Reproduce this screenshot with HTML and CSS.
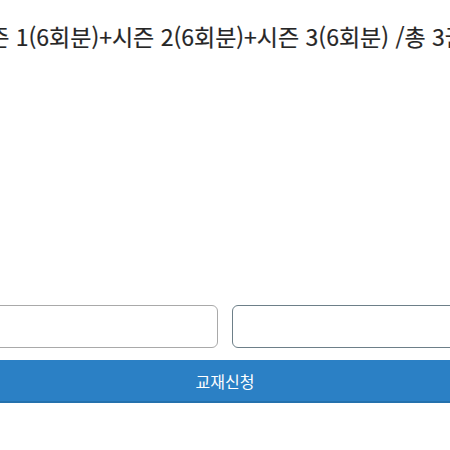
FILE: index.html
```html
<!DOCTYPE html>
<html lang="ko">
<head>
  <meta charset="UTF-8">
  <title>교재신청</title>
  <link rel="stylesheet" href="styles.css">
</head>
<body>
  <div class="page">
    <p class="desc">시즌 1(6회분)+시즌 2(6회분)+시즌 3(6회분) /총 3권</p>

    <div class="fields">
      <input type="text" class="field">
      <input type="text" class="field field-focus">
    </div>

    <button type="button" class="apply">교재신청</button>
  </div>
</body>
</html>
```

FILE: styles.css
```css
body { margin: 0; background: #fff; font-family: "Noto Sans CJK KR", "Noto Sans", sans-serif; overflow: hidden; }
.page { width: 450px; height: 450px; overflow: hidden; }
.desc { margin: 20px 0 0 -33px; white-space: nowrap; font-size: 23px; line-height: 32px; color: #262626; -webkit-text-stroke: 0.2px #262626; }
.fields { display: grid; grid-template-columns: 1fr 1fr; gap: 14px; margin: 253px -20px 0; }
.field { height: 43px; box-sizing: border-box; border: 1px solid #a9a9a9; border-radius: 6px; background: #fff; padding: 0 10px; font: inherit; }
.field-focus { border-color: #6d7f88; }
.apply { display: block; width: 100%; height: 43px; margin-top: 12px; border: none; border-bottom: 2px solid #2471ad; background: #2b80c5; color: #fff; font: inherit; font-size: 16px; cursor: pointer; }
```
